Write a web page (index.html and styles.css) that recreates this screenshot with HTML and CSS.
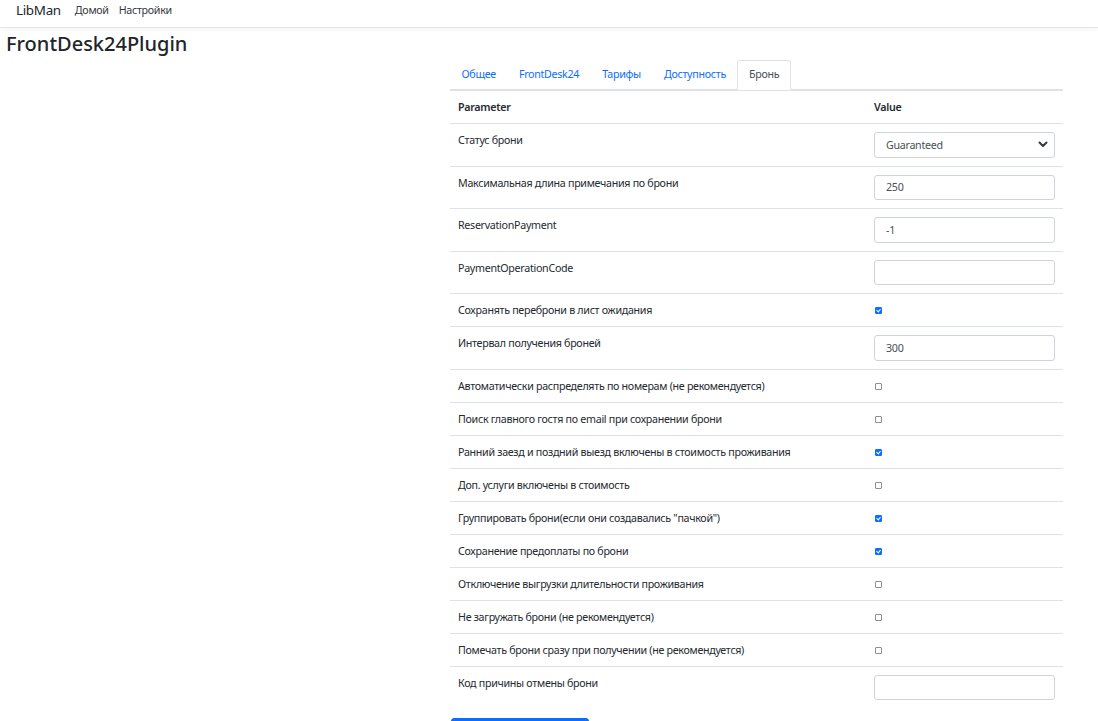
FILE: index.html
```html
<!DOCTYPE html>
<html lang="ru">
<head>
    <meta charset="UTF-8">
    <title>FrontDesk24Plugin - LibMan</title>
    <link rel="stylesheet" href="styles.css">
</head>
<body>

<header class="navbar">
    <a class="navbar-brand" href="#">LibMan</a>
    <a class="nav-item" href="#">Домой</a>
    <a class="nav-item" href="#">Настройки</a>
</header>

<main class="page">
    <h1 class="page-title">FrontDesk24Plugin</h1>

    <div class="settings">
        <ul class="tabs">
            <li><a class="tab" href="#">Общее</a></li>
            <li><a class="tab" href="#">FrontDesk24</a></li>
            <li><a class="tab" href="#">Тарифы</a></li>
            <li><a class="tab" href="#">Доступность</a></li>
            <li><a class="tab active" href="#">Бронь</a></li>
        </ul>

        <table class="params">
            <thead>
                <tr>
                    <th class="col-name">Parameter</th>
                    <th class="col-value">Value</th>
                </tr>
            </thead>
            <tbody>
                <tr>
                    <td>Статус брони</td>
                    <td>
                        <div class="select-wrap">
                            <select class="field">
                                <option>Guaranteed</option>
                                <option>Tentative</option>
                            </select>
                            <svg class="chevron" width="10" height="7" viewBox="0 0 10 7"><path d="M1.5 1.5 L5 5 L8.5 1.5" fill="none" stroke="#343a40" stroke-width="2" stroke-linecap="round" stroke-linejoin="round"/></svg>
                        </div>
                    </td>
                </tr>
                <tr>
                    <td>Максимальная длина примечания по брони</td>
                    <td><input class="field" type="text" value="250"></td>
                </tr>
                <tr>
                    <td>ReservationPayment</td>
                    <td><input class="field" type="text" value="-1"></td>
                </tr>
                <tr>
                    <td>PaymentOperationCode</td>
                    <td><input class="field" type="text" value=""></td>
                </tr>
                <tr>
                    <td>Сохранять переброни в лист ожидания</td>
                    <td><input class="check" type="checkbox" checked></td>
                </tr>
                <tr>
                    <td>Интервал получения броней</td>
                    <td><input class="field" type="text" value="300"></td>
                </tr>
                <tr>
                    <td>Автоматически распределять по номерам (не рекомендуется)</td>
                    <td><input class="check" type="checkbox"></td>
                </tr>
                <tr>
                    <td>Поиск главного гостя по email при сохранении брони</td>
                    <td><input class="check" type="checkbox"></td>
                </tr>
                <tr>
                    <td>Ранний заезд и поздний выезд включены в стоимость проживания</td>
                    <td><input class="check" type="checkbox" checked></td>
                </tr>
                <tr>
                    <td>Доп. услуги включены в стоимость</td>
                    <td><input class="check" type="checkbox"></td>
                </tr>
                <tr>
                    <td>Группировать брони(если они создавались "пачкой")</td>
                    <td><input class="check" type="checkbox" checked></td>
                </tr>
                <tr>
                    <td>Сохранение предоплаты по брони</td>
                    <td><input class="check" type="checkbox" checked></td>
                </tr>
                <tr>
                    <td>Отключение выгрузки длительности проживания</td>
                    <td><input class="check" type="checkbox"></td>
                </tr>
                <tr>
                    <td>Не загружать брони (не рекомендуется)</td>
                    <td><input class="check" type="checkbox"></td>
                </tr>
                <tr>
                    <td>Помечать брони сразу при получении (не рекомендуется)</td>
                    <td><input class="check" type="checkbox"></td>
                </tr>
                <tr>
                    <td>Код причины отмены брони</td>
                    <td><input class="field" type="text" value=""></td>
                </tr>
            </tbody>
        </table>

        <button class="save-button" type="button"></button>
    </div>
</main>

</body>
</html>
```

FILE: styles.css
```css
body {
    margin: 0;
    font-family: "Noto Sans", "Open Sans", sans-serif;
    font-size: 10.7px;
    letter-spacing: -0.3px;
    line-height: 1.5;
    color: #252a2f;
    background-color: #fff;
}
a {
    text-decoration: none;
}
.navbar {
    display: flex;
    align-items: flex-start;
    height: 27px;
    padding: 0 16px;
    line-height: 20px;
    border-bottom: 1px solid #e3e5e8;
    box-shadow: 0 2px 4px rgba(0, 0, 0, 0.04);
}
.navbar-brand {
    font-size: 13.4px;
    color: #212529;
    margin-right: 14px;
}
.nav-item {
    color: #343a40;
    margin-right: 10px;
}
.page {
    padding: 0 6px;
}
.page-title {
    margin: 4px 0 0;
    font-size: 20px;
    font-weight: 500;
    letter-spacing: 0;
    line-height: 23px;
    color: #212529;
}
.settings {
    width: 613px;
    margin: 5px 0 0 444px;
}
.tabs {
    display: flex;
    list-style: none;
    margin: 0;
    padding: 0;
    border-bottom: 1px solid #dee2e6;
}
.tab {
    display: block;
    padding: 5px 10.5px 7px;
    line-height: 16px;
    margin-bottom: -1px;
    border: 1px solid transparent;
    border-radius: 3px 3px 0 0;
    color: #0d6efd;
}
.tab.active {
    color: #495057;
    background-color: #fff;
    border-color: #dee2e6 #dee2e6 #fff;
}
.params {
    width: 100%;
    border-collapse: collapse;
}
.params th,
.params td {
    padding: 8px;
    line-height: 16px;
    text-align: left;
    vertical-align: top;
    border-top: 1px solid #dee2e6;
}
.params th {
    font-weight: 600;
}
.col-value {
    width: 181px;
}
.field {
    display: block;
    box-sizing: border-box;
    width: 100%;
    height: 25.5px;
    padding: 3px 11px;
    font-family: inherit;
    font-size: 10.7px;
    letter-spacing: -0.3px;
    color: #495057;
    background-color: #fff;
    border: 1px solid #ced4da;
    border-radius: 3px;
    outline: none;
}
.select-wrap {
    position: relative;
}
select.field {
    appearance: none;
    -webkit-appearance: none;
    padding-right: 24px;
}
.chevron {
    position: absolute;
    right: 7px;
    top: 9px;
    pointer-events: none;
}
.check {
    appearance: none;
    -webkit-appearance: none;
    position: relative;
    display: block;
    box-sizing: border-box;
    width: 7px;
    height: 7px;
    margin: 5px 0 0 1px;
    border: 1px solid #8f8f8f;
    border-radius: 1px;
    background-color: #fff;
}
.check:checked {
    background-color: #0d6efd;
    border-color: #0d6efd;
}
.check:checked::after {
    content: "";
    position: absolute;
    left: 1px;
    top: 0;
    width: 2px;
    height: 3px;
    border: solid #fff;
    border-width: 0 1px 1px 0;
    transform: rotate(40deg);
}
.save-button {
    display: block;
    margin: 10px 0 0 1px;
    width: 138px;
    height: 26px;
    background-color: #0d6efd;
    border: 1px solid #0d6efd;
    border-radius: 3px;
}
```
